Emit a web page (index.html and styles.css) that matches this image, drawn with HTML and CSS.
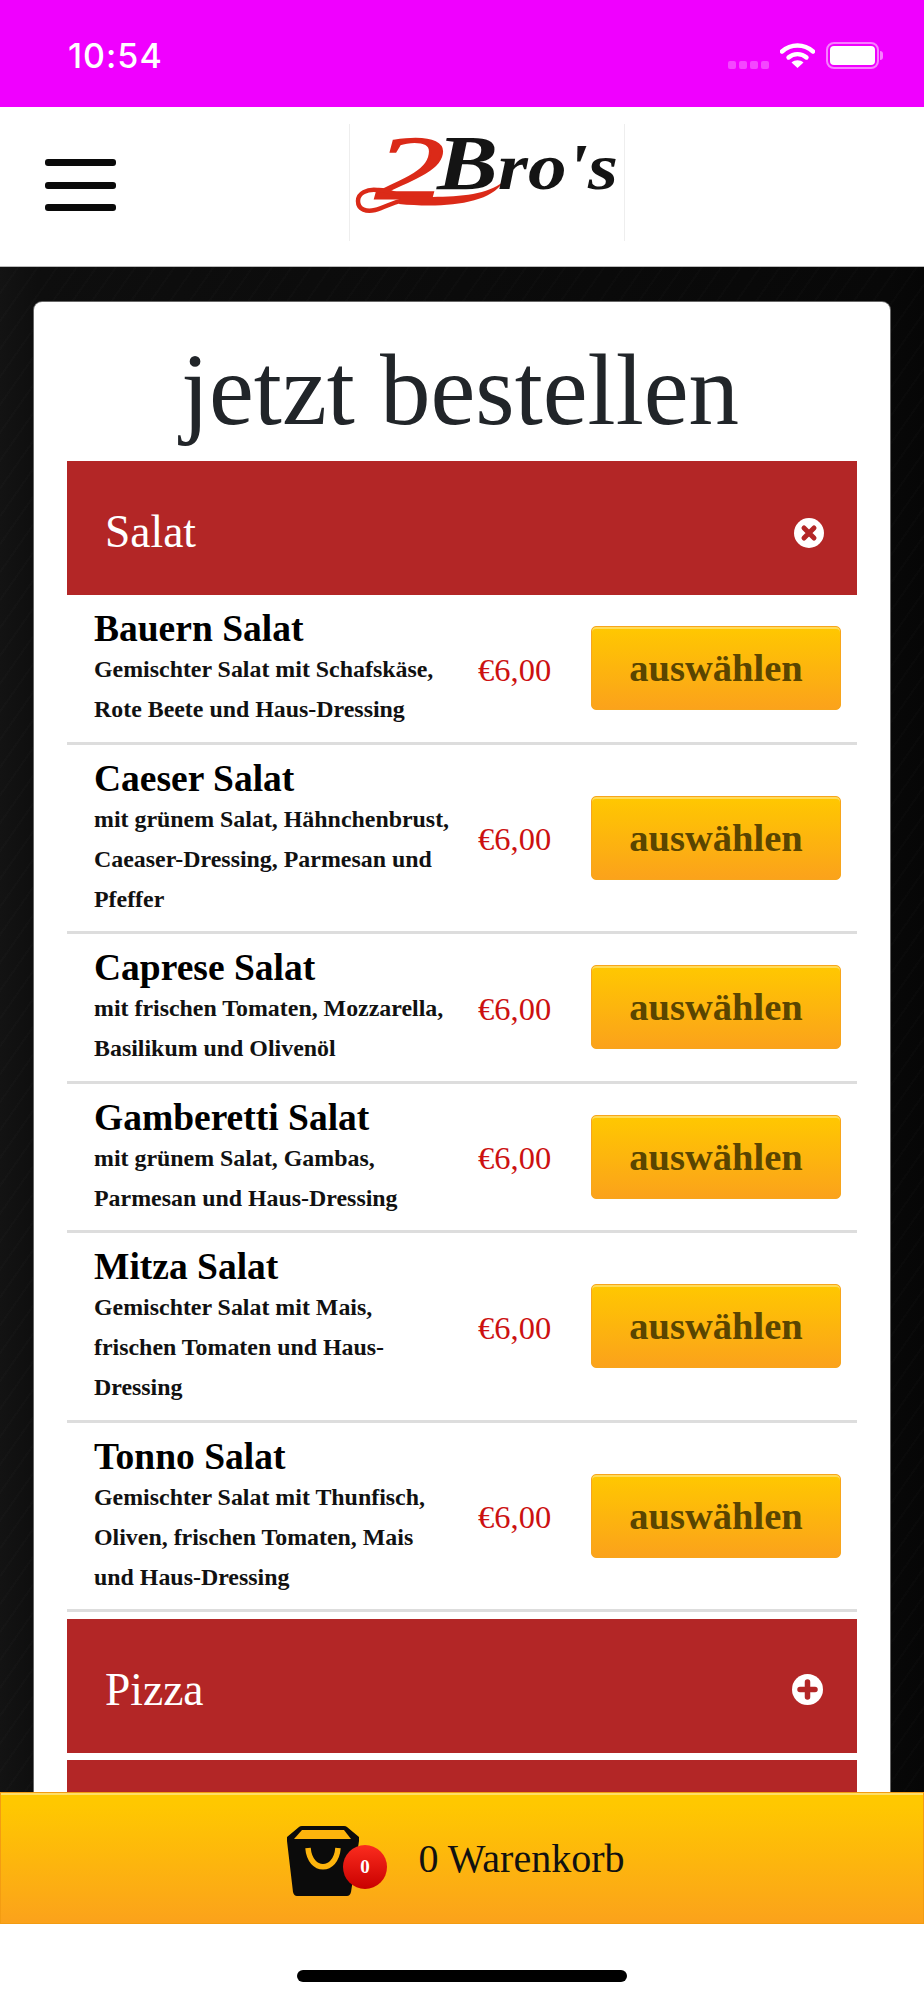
FILE: index.html
```html
<!DOCTYPE html>
<html>

<head>
    <link rel="stylesheet" href="styles.css">
</head>

<body>
    <div class="status-bar">
        <span class="time">10:54</span>
        <div class="status-icons">
            <div class="signal"><i></i><i></i><i></i><i></i></div>
            <svg class="wifi" width="35" height="26" viewBox="0 0 35 26">
                <path d="M2 9.5C11 1.5 24 1.5 33 9.5" fill="none" stroke="#fff" stroke-width="4.4" stroke-linecap="round" />
                <path d="M8.5 15.5C13.5 11 21.5 11 26.5 15.5" fill="none" stroke="#fff" stroke-width="4.4" stroke-linecap="round" />
                <path d="M17.5 26L11.5 20.5C15 17.5 20 17.5 23.5 20.5Z" fill="#fff" />
            </svg>
            <div class="battery"><div class="battery-fill"></div></div>
            <div class="battery-nub"></div>
        </div>
    </div>

    <header class="top-nav">
        <button class="menu-btn"><span></span><span></span><span></span></button>
        <div class="logo">
            <svg width="274" height="117" viewBox="349 124 274 117">
                <text x="374" y="199" class="logo-two" textLength="70" lengthAdjust="spacingAndGlyphs">2</text>
                <path d="M404 197C396 196 388 189 376 190C366 189 357 193 357 201C357 210 366 212 374 210C386 207 396 199 412 199" fill="none" stroke="#db2a18" stroke-width="4.5" stroke-linecap="round" />
                <path d="M400 196C440 198 482 198 502 182C488 205 440 208 398 204Z" fill="#db2a18" />
                <text x="436" y="189" class="logo-bros" textLength="181" lengthAdjust="spacingAndGlyphs">B<tspan class="logo-small">ro's</tspan></text>
            </svg>
        </div>
    </header>

    <main class="board">
        <section class="card">
            <h1 class="page-title">jetzt bestellen</h1>

            <div class="cat-bar">
                <span>Salat</span>
                <svg class="cat-icon" width="30" height="30" viewBox="0 0 30 30">
                    <circle cx="15" cy="15" r="15" fill="#fff" />
                    <path d="M10 10L20 20M20 10L10 20" stroke="#b32626" stroke-width="5" stroke-linecap="round" />
                </svg>
            </div>

            <div class="item">
                <div class="item-info">
                    <h3>Bauern Salat</h3>
                    <p>Gemischter Salat mit Schafskäse,<br>Rote Beete und Haus-Dressing</p>
                </div>
                <span class="price">€6,00</span>
                <button class="pick-btn">auswählen</button>
            </div>
            <div class="item">
                <div class="item-info">
                    <h3>Caeser Salat</h3>
                    <p>mit grünem Salat, Hähnchenbrust,<br>Caeaser-Dressing, Parmesan und<br>Pfeffer</p>
                </div>
                <span class="price">€6,00</span>
                <button class="pick-btn">auswählen</button>
            </div>
            <div class="item">
                <div class="item-info">
                    <h3>Caprese Salat</h3>
                    <p>mit frischen Tomaten, Mozzarella,<br>Basilikum und Olivenöl</p>
                </div>
                <span class="price">€6,00</span>
                <button class="pick-btn">auswählen</button>
            </div>
            <div class="item">
                <div class="item-info">
                    <h3>Gamberetti Salat</h3>
                    <p>mit grünem Salat, Gambas,<br>Parmesan und Haus-Dressing</p>
                </div>
                <span class="price">€6,00</span>
                <button class="pick-btn">auswählen</button>
            </div>
            <div class="item">
                <div class="item-info">
                    <h3>Mitza Salat</h3>
                    <p>Gemischter Salat mit Mais,<br>frischen Tomaten und Haus-<br>Dressing</p>
                </div>
                <span class="price">€6,00</span>
                <button class="pick-btn">auswählen</button>
            </div>
            <div class="item">
                <div class="item-info">
                    <h3>Tonno Salat</h3>
                    <p>Gemischter Salat mit Thunfisch,<br>Oliven, frischen Tomaten, Mais<br>und Haus-Dressing</p>
                </div>
                <span class="price">€6,00</span>
                <button class="pick-btn">auswählen</button>
            </div>

            <div class="cat-bar cat-bar-closed">
                <span>Pizza</span>
                <svg class="cat-icon" width="31" height="31" viewBox="0 0 31 31">
                    <circle cx="15.5" cy="15.5" r="15.5" fill="#fff" />
                    <path d="M15.5 8V23M8 15.5H23" stroke="#b32626" stroke-width="5.5" stroke-linecap="round" />
                </svg>
            </div>
            <div class="cat-bar cat-bar-closed"></div>
        </section>
    </main>

    <div class="bottom">
        <button class="cart-bar">
            <span class="cart-icon">
                <svg width="102" height="72" viewBox="0 0 102 72">
                    <defs>
                        <linearGradient id="badge" x1="0" y1="0" x2="0" y2="1">
                            <stop offset="0" stop-color="#fb2c1e" />
                            <stop offset="1" stop-color="#c90000" />
                        </linearGradient>
                    </defs>
                    <path d="M1 12L13 2Q14 1 16 1H58Q60 1 61 2L73 12V16L65 67Q64 71 61 71H11Q8 71 7 67L1 16Z" fill="#0b0b0b" />
                    <path d="M8 14L16 5H58L65 14Z" fill="#fdb40c" />
                    <path d="M22 23C24 48 50 48 52 23" fill="none" stroke="#fdb40c" stroke-width="5.5" />
                    <circle cx="79" cy="42" r="22" fill="url(#badge)" />
                    <text x="79" y="48" class="badge-num">0</text>
                </svg>
            </span>
            <span>0 Warenkorb</span>
        </button>
        <div class="home-area"><div class="home-bar"></div></div>
    </div>
</body>

</html>
```

FILE: styles.css
```css
* {
    box-sizing: border-box;
}

html,
body {
    margin: 0;
    padding: 0;
}

body {
    height: 2000px;
    overflow: hidden;
    background-color: #fff;
    font-family: "Liberation Serif", "DejaVu Serif", serif;
}

.status-bar {
    height: 107px;
    background-color: #f000ff;
    display: flex;
    align-items: flex-start;
    justify-content: space-between;
    padding: 38px 41px 0 68px;
    color: #fff;
}

.time {
    font-family: Inter, "Liberation Sans", sans-serif;
    font-size: 34px;
    font-weight: 500;
    line-height: 36px;
    letter-spacing: 1px;
}

.status-icons {
    display: flex;
    align-items: flex-start;
    padding-top: 4px;
}

.signal {
    display: flex;
    gap: 3px;
    margin: 19px 11px 0 0;
}

.signal i {
    display: block;
    width: 8px;
    height: 8px;
    border-radius: 2px;
    background-color: rgba(255, 255, 255, 0.28);
}

.wifi {
    margin-right: 11px;
}

.battery {
    width: 53px;
    height: 27px;
    border: 2px solid rgba(255, 255, 255, 0.5);
    border-radius: 8px;
    padding: 2px;
}

.battery-fill {
    height: 100%;
    background-color: #fff;
    border-radius: 4px;
}

.battery-nub {
    width: 3px;
    height: 9px;
    margin: 9px 0 0 1px;
    background-color: rgba(255, 255, 255, 0.5);
    border-radius: 0 3px 3px 0;
}

.top-nav {
    height: 160px;
    background-color: #fff;
    border-bottom: 1px solid #bbb;
    display: flex;
    padding: 17px 0 0 45px;
}

.menu-btn {
    width: 71px;
    height: 52px;
    margin-top: 35px;
    padding: 0;
    border: 0;
    background: none;
    display: flex;
    flex-direction: column;
    justify-content: space-between;
}

.menu-btn span {
    display: block;
    width: 100%;
    height: 7px;
    background-color: #0a0a0a;
    border-radius: 3px;
}

.logo {
    width: 276px;
    height: 117px;
    margin-left: 233px;
    border-left: 1px solid #eee;
    border-right: 1px solid #eee;
}

.logo svg {
    display: block;
    overflow: visible;
}

.logo-two {
    font-size: 90px;
    font-style: italic;
    fill: #db2a18;
    stroke: #db2a18;
    stroke-width: 1.5px;
}

.logo-bros {
    font-size: 78px;
    font-weight: bold;
    font-style: italic;
    fill: #141414;
}

.logo-small {
    font-size: 66px;
}

.board {
    height: 1733px;
    padding: 35px 34px 0;
    background-color: #0a0a0a;
    background-image:
        repeating-linear-gradient(125deg, transparent 0 14px, rgba(255, 255, 255, 0.012) 14px 16px),
        linear-gradient(90deg, #131313, #0e0e0e 4%, #080808 96%, #060606);
}

.card {
    height: 1698px;
    background-color: #fff;
    border-radius: 8px 8px 0 0;
    box-shadow: 0 0 0 1px #666;
    padding: 0 33px;
}

.page-title {
    margin: 0;
    height: 159px;
    padding: 33px 4px 0 0;
    font-size: 101px;
    font-weight: normal;
    line-height: 110px;
    text-align: center;
    color: #212529;
}

.cat-bar {
    height: 134px;
    background-color: #b32626;
    color: #fff;
    font-size: 45.5px;
    display: flex;
    align-items: center;
    justify-content: space-between;
    padding: 10px 33px 0 38px;
}

.cat-bar span {
    margin-top: -4px;
}

.cat-bar-closed {
    margin-top: 7px;
    padding: 6px 34px 0 38px;
}

.cat-bar-closed span {
    margin-top: 1px;
}

.item {
    display: flex;
    align-items: center;
    border-bottom: 3px solid #ddd;
    padding: 13.25px 16px 13.25px 27px;
}

.item-info {
    width: 384px;
    padding-top: 1px;
    margin-bottom: -1px;
}

.item-info h3 {
    margin: 0;
    font-size: 37.5px;
    font-weight: bold;
    line-height: 40px;
    color: #000;
}

.item-info p {
    margin: 0;
    font-size: 23.9px;
    font-weight: bold;
    line-height: 40px;
    white-space: nowrap;
    color: #111;
}

.price {
    width: 113px;
    padding-top: 4px;
    font-size: 32.5px;
    color: #cc1111;
}

.pick-btn {
    width: 250px;
    height: 84px;
    padding: 0;
    border: 1px solid #f7a51c;
    border-radius: 5px;
    background-image: linear-gradient(#ffc800, #fba21b);
    box-shadow: inset 0 2px 0 rgba(255, 255, 255, 0.35);
    font-family: inherit;
    font-size: 38.5px;
    font-weight: bold;
    color: #5a4500;
}

.bottom {
    position: fixed;
    left: 0;
    right: 0;
    bottom: 0;
}

.cart-bar {
    width: 100%;
    height: 132px;
    border: 1px solid #f39c12;
    background-image: linear-gradient(#ffc800 8%, #fba21b);
    box-shadow: inset 0 2px 0 rgba(255, 255, 255, 0.4);
    display: flex;
    align-items: center;
    justify-content: center;
    gap: 31px;
    padding: 0 14px 0 0;
    font-family: inherit;
    font-size: 40px;
    color: #111;
}

.cart-icon {
    display: block;
    width: 102px;
    height: 72px;
    margin-top: 5px;
}

.cart-icon svg {
    display: block;
}

.badge-num {
    font-size: 19px;
    font-weight: bold;
    text-anchor: middle;
    fill: #fff;
}

.home-area {
    height: 76px;
    background-color: #fff;
    padding-top: 46px;
}

.home-bar {
    width: 330px;
    height: 12px;
    margin: 0 auto;
    border-radius: 6px;
    background-color: #000;
}
```
